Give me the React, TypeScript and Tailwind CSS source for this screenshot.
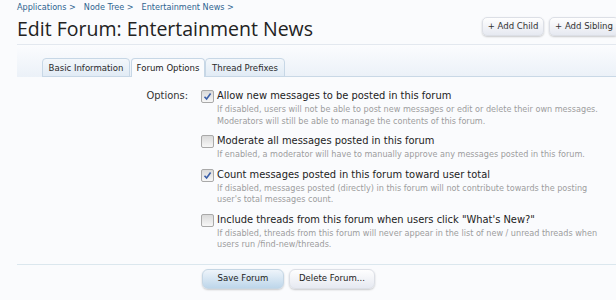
import React from "react";

const body = "font-['DejaVu_Sans_Condensed','DejaVu_Sans',Tahoma,sans-serif]";

type Opt = { label: string; hint: string[]; checked: boolean };

const options: Opt[] = [
  {
    label: "Allow new messages to be posted in this forum",
    hint: [
      "If disabled, users will not be able to post new messages or edit or delete their own messages.",
      "Moderators will still be able to manage the contents of this forum.",
    ],
    checked: true,
  },
  {
    label: "Moderate all messages posted in this forum",
    hint: ["If enabled, a moderator will have to manually approve any messages posted in this forum."],
    checked: false,
  },
  {
    label: "Count messages posted in this forum toward user total",
    hint: [
      "If disabled, messages posted (directly) in this forum will not contribute towards the posting",
      "user's total messages count.",
    ],
    checked: true,
  },
  {
    label: 'Include threads from this forum when users click "What\'s New?"',
    hint: [
      "If disabled, threads from this forum will never appear in the list of new / unread threads when",
      "users run /find-new/threads.",
    ],
    checked: false,
  },
];

function Checkbox({ checked }: { checked: boolean }) {
  return (
    <span className="mt-[1px] flex h-[13px] w-[13px] shrink-0 items-center justify-center rounded-[2px] border border-[#a9a9a9] bg-gradient-to-b from-[#dadada] to-[#f7f7f7]">
      {checked && (
        <svg width="9" height="9" viewBox="0 0 9 9">
          <path d="M1.5 4.8 L3.6 7 L7.6 1.6" fill="none" stroke="#3b5fa8" strokeWidth="1.6" />
        </svg>
      )}
    </span>
  );
}

export default function App() {
  return (
    <div className={`h-[300px] w-[616px] overflow-hidden bg-[#fafbfd] pl-[17px] ${body}`}>
      {/* breadcrumb */}
      <div className="flex gap-[8px] pt-[1px] text-[9px] leading-[12px] text-[#2f6490]">
        <span>Applications &gt;</span>
        <span>Node Tree &gt;</span>
        <span>Entertainment News &gt;</span>
      </div>

      {/* title row */}
      <div className="flex h-[31px] items-start justify-between">
        <h1 className="pt-[2px] font-['Open_Sans',sans-serif] text-[19.5px] leading-[27px] text-[#222]">
          Edit Forum: Entertainment News
        </h1>
        <div className="mr-[-3px] flex gap-[5px] pt-[4px]">
          <button className="h-[19px] w-[62px] rounded-[5px] border border-[#dcdfe6] bg-gradient-to-b from-[#fefefe] to-[#e6e9f1] text-[9.5px] text-[#333] shadow-[0_1px_2px_rgba(0,0,0,0.2)]">
            + Add Child
          </button>
          <button className="h-[19px] w-[70px] rounded-[5px] border border-[#dcdfe6] bg-gradient-to-b from-[#fefefe] to-[#e6e9f1] text-[9.5px] text-[#333] shadow-[0_1px_2px_rgba(0,0,0,0.2)]">
            + Add Sibling
          </button>
        </div>
      </div>

      {/* tab strip */}
      <div className="flex h-[33px] items-end border-t border-[#e3e8ef] bg-gradient-to-b from-[#fbfcfe] to-[#ebf1f8] pl-[25px]">
        <div className="flex w-full border-b border-[#c9d8e6] text-[9.5px]">
          <span className="mb-[-1px] w-[88px] rounded-t-[4px] border border-[#c7d7e6] bg-gradient-to-b from-[#f3f7fb] to-[#e1ebf5] text-center leading-[17px] text-[#2a2a2a]">
            Basic Information
          </span>
          <span className="mb-[-1px] ml-[1px] w-[74px] rounded-t-[4px] border border-b-0 border-[#c7d7e6] bg-[#fafbfd] text-center leading-[18px] text-[#222]">
            Forum Options
          </span>
          <span className="mb-[-1px] w-[80px] rounded-t-[4px] border border-[#c7d7e6] bg-gradient-to-b from-[#f3f7fb] to-[#e1ebf5] text-center leading-[17px] text-[#2a2a2a]">
            Thread Prefixes
          </span>
        </div>
      </div>

      {/* options */}
      <div className="flex pt-[12px]">
        <div className="w-[184px] pr-[13px] text-right text-[11px] leading-[14px] text-[#333]">Options:</div>
        <div className="flex flex-col gap-[7px]">
          {options.map((o) => (
            <div key={o.label} className="flex gap-[3px]">
              <Checkbox checked={o.checked} />
              <div>
                <div className="text-[11px] leading-[14px] text-[#222]">{o.label}</div>
                <div className="mt-[1px] text-[9px] leading-[11.5px] text-[#9d9d9d]">
                  {o.hint.map((h) => (
                    <div key={h}>{h}</div>
                  ))}
                </div>
              </div>
            </div>
          ))}
        </div>
      </div>

      {/* footer */}
      <div className="mt-[13px] flex gap-[5px] border-t border-[#dbe7ee] pl-[185px] pt-[4px]">
        <button className="h-[20px] w-[82px] rounded-[6px] border border-[#c5d6e4] bg-gradient-to-b from-[#eef4fa] to-[#bdd6ea] text-[9.5px] text-[#222] shadow-[0_1px_2px_rgba(0,0,0,0.2)]">
          Save Forum
        </button>
        <button className="h-[20px] w-[86px] rounded-[6px] border border-[#dcdfe6] bg-gradient-to-b from-[#fefefe] to-[#e6e9f1] text-[9.5px] text-[#222] shadow-[0_1px_2px_rgba(0,0,0,0.2)]">
          Delete Forum...
        </button>
      </div>
    </div>
  );
}
